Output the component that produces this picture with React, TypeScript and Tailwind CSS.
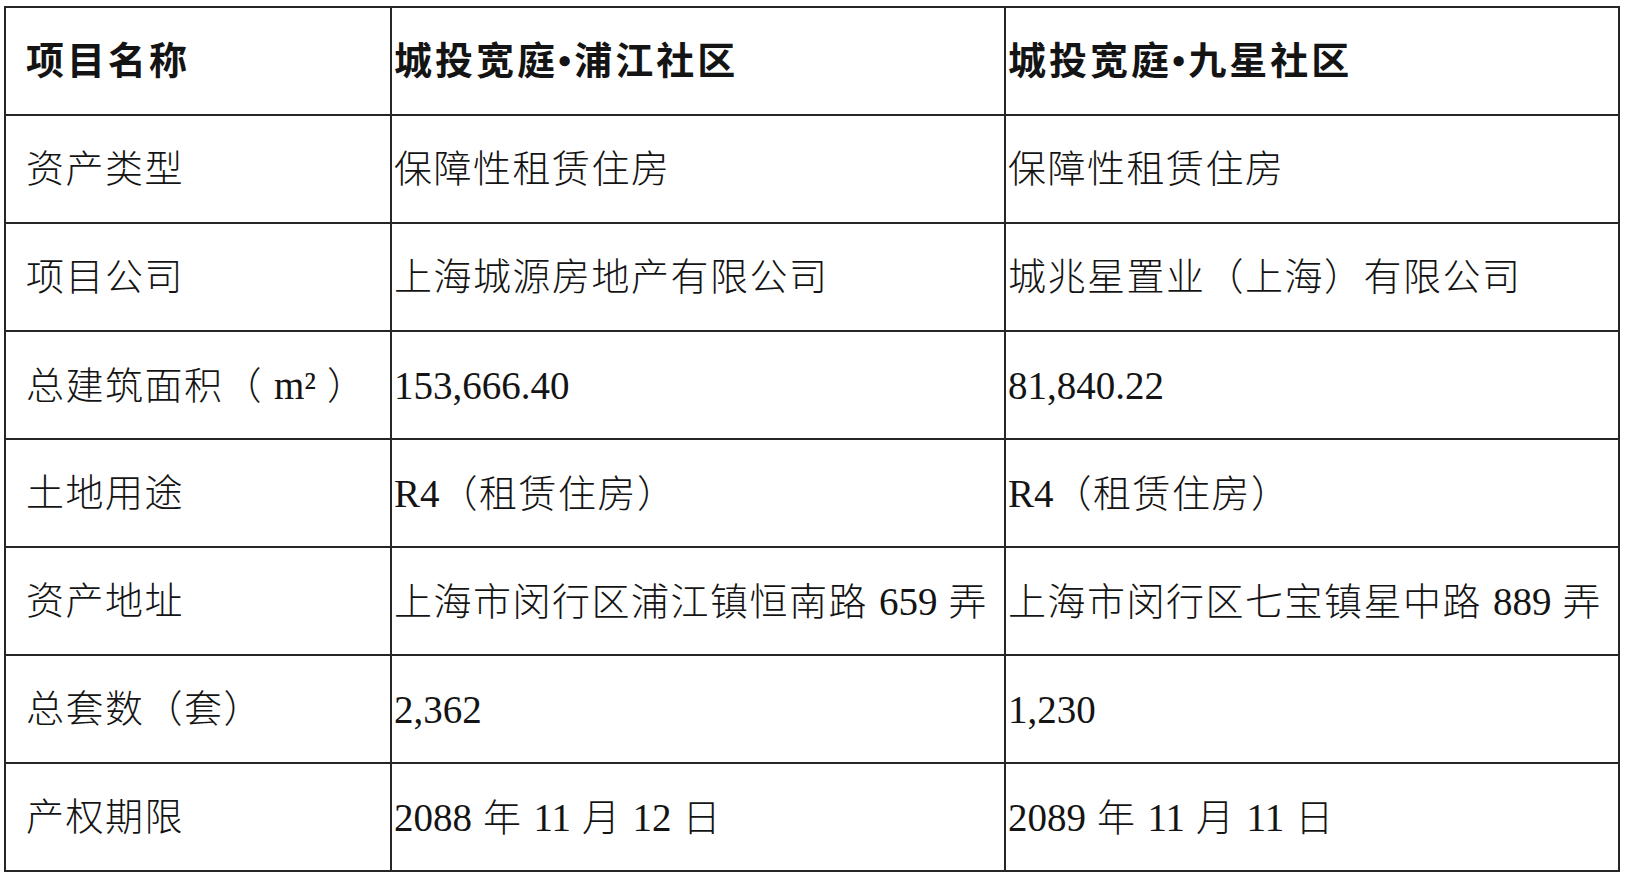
import React from "react";

const rows: [string, string, string][] = [
  ["项目名称", "城投宽庭•浦江社区", "城投宽庭•九星社区"],
  ["资产类型", "保障性租赁住房", "保障性租赁住房"],
  ["项目公司", "上海城源房地产有限公司", "城兆星置业（上海）有限公司"],
  ["总建筑面积（ m² ）", "153,666.40", "81,840.22"],
  ["土地用途", "R4（租赁住房）", "R4（租赁住房）"],
  ["资产地址", "上海市闵行区浦江镇恒南路 659 弄", "上海市闵行区七宝镇星中路 889 弄"],
  ["总套数（套）", "2,362", "1,230"],
  ["产权期限", "2088 年 11 月 12 日", "2089 年 11 月 11 日"],
];

function Runs({ text, bold }: { text: string; bold: boolean }) {
  const parts = text.split(/([A-Za-z0-9,.²]+)/).filter((p) => p.length > 0);
  return (
    <>
      {parts.map((p, i) =>
        /^[A-Za-z0-9,.²]+$/.test(p) ? (
          <span key={i} className="tracking-normal text-[39px] font-normal">
            {p}
          </span>
        ) : (
          <span
            key={i}
            className={bold ? "tracking-[3px] font-bold" : "tracking-[1.5px] font-light"}
          >
            {p}
          </span>
        )
      )}
    </>
  );
}

export default function App() {
  return (
    <div className="w-[1632px] h-[884px] bg-white pt-[6px] pl-[4px]">
      <table
        className="table-fixed border-collapse text-[#141414] text-[38px] leading-none"
        style={{ fontFamily: '"Liberation Serif", "Noto Sans CJK SC", serif' }}
      >
        <colgroup>
          <col className="w-[386px]" />
          <col className="w-[614px]" />
          <col className="w-[614px]" />
        </colgroup>
        <tbody>
          {rows.map((r, ri) => (
            <tr key={ri} className="h-[108px]">
              {r.map((c, ci) => (
                <td
                  key={ci}
                  className={`border-2 border-[#262626] align-middle whitespace-nowrap ${
                    ci === 0 ? "pl-[20px]" : "pl-[2px]"
                  }`}
                >
                  <Runs text={c} bold={ri === 0} />
                </td>
              ))}
            </tr>
          ))}
        </tbody>
      </table>
    </div>
  );
}
